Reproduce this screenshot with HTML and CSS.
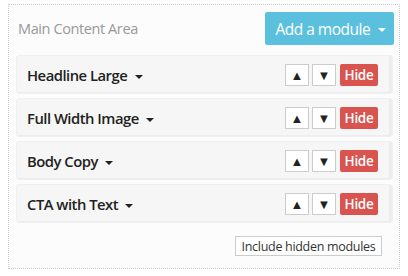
FILE: index.html
```html
<!DOCTYPE html>
<html lang="en">

<head>
  <meta charset="UTF-8" />
  <title>Main Content Area</title>
  <link rel="stylesheet" href="styles.css">
</head>

<body>

  <!-- Module area -->
  <div class="area">
    <div class="area-head">
      <h2>Main Content Area</h2>
      <button class="add-btn">Add a module <span class="caret"></span></button>
    </div>

    <div class="modules">
      <div class="module">
        <span class="module-name">Headline Large <span class="caret"></span></span>
        <div class="controls">
          <button class="move">&#9650;</button>
          <button class="move">&#9660;</button>
          <button class="hide">Hide</button>
        </div>
      </div>
      <div class="module">
        <span class="module-name">Full Width Image <span class="caret"></span></span>
        <div class="controls">
          <button class="move">&#9650;</button>
          <button class="move">&#9660;</button>
          <button class="hide">Hide</button>
        </div>
      </div>
      <div class="module">
        <span class="module-name">Body Copy <span class="caret"></span></span>
        <div class="controls">
          <button class="move">&#9650;</button>
          <button class="move">&#9660;</button>
          <button class="hide">Hide</button>
        </div>
      </div>
      <div class="module">
        <span class="module-name">CTA with Text <span class="caret"></span></span>
        <div class="controls">
          <button class="move">&#9650;</button>
          <button class="move">&#9660;</button>
          <button class="hide">Hide</button>
        </div>
      </div>
    </div>

    <div class="area-foot">
      <button class="hidden-btn">Include hidden modules</button>
    </div>
  </div>

</body>

</html>
```

FILE: styles.css
```css
* {
  margin: 0;
  padding: 0;
  box-sizing: border-box;
}

body {
  font-family: 'Open Sans', sans-serif;
  background: #fff;
  color: #222;
}

button {
  font-family: inherit;
  cursor: pointer;
}

.area {
  margin: 4px 8px 7px 8px;
  border: 1px dotted #ccc;
  padding: 7px 6px 12px 7px;
  background: #fcfcfc;
}

.area-head {
  display: flex;
  justify-content: space-between;
  align-items: center;
  height: 33px;
  margin-bottom: 10px;
}

.area-head h2 {
  font-size: 14.5px;
  font-weight: 400;
  letter-spacing: -0.4px;
  color: #999;
  padding-left: 2px;
}

.add-btn {
  height: 33px;
  width: 129px;
  margin-right: -1px;
  padding-left: 2px;
  border: none;
  border-radius: 2px;
  background: #5bc0de;
  color: #fff;
  font-size: 15.5px;
  letter-spacing: -0.5px;
}

.caret {
  display: inline-block;
  width: 0;
  height: 0;
  margin-left: 4px;
  vertical-align: middle;
  border-top: 4px solid;
  border-left: 4px solid transparent;
  border-right: 4px solid transparent;
}

.modules {
  display: flex;
  flex-direction: column;
  gap: 4px;
}

.module {
  display: flex;
  justify-content: space-between;
  align-items: center;
  height: 39px;
  padding: 0 14px 0 10px;
  background: #f6f6f6;
  border: 1px solid #f0f0f0;
  border-radius: 3px;
  box-shadow: inset -3px -1px 0 #ededed;
}

.module-name {
  font-size: 14.8px;
  font-weight: 600;
  letter-spacing: -0.5px;
  color: #222;
}

.controls {
  display: flex;
  gap: 3px;
}

.move {
  width: 24px;
  height: 22px;
  border: 1px solid #ccc;
  background: #fff;
  color: #222;
  font-size: 13px;
  line-height: 20px;
}

.hide {
  width: 38px;
  height: 22px;
  margin-left: 1px;
  border: none;
  border-radius: 2px;
  background: #d9534f;
  color: #fff;
  font-size: 13.5px;
  font-weight: 600;
  letter-spacing: -0.3px;
}

.area-foot {
  display: flex;
  justify-content: flex-end;
  margin-top: 13px;
  padding-right: 11px;
}

.hidden-btn {
  width: 147px;
  height: 20px;
  border: 1px solid #ccc;
  background: #fff;
  color: #333;
  font-size: 12.5px;
  letter-spacing: -0.3px;
}
```
